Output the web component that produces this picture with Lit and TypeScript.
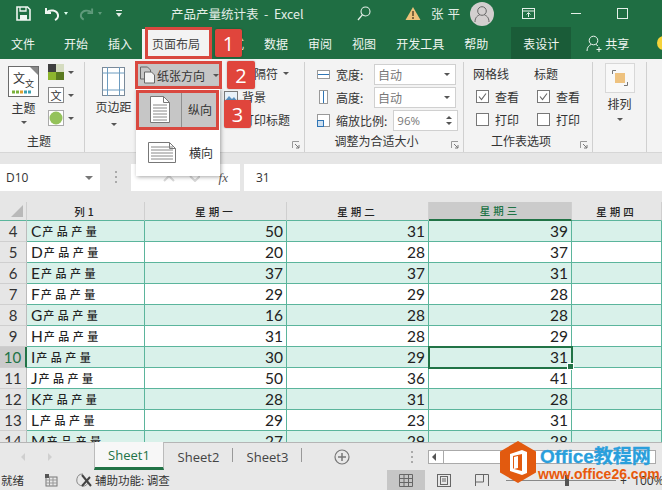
import { LitElement, html, css, svg } from "lit";
import { customElement } from "lit/decorators.js";

const rows: [number, string, number, number, number][] = [
  [4, "C", 50, 31, 39], [5, "D", 20, 28, 37], [6, "E", 37, 37, 31], [7, "F", 29, 29, 28],
  [8, "G", 16, 28, 28], [9, "H", 31, 28, 29], [10, "I", 30, 29, 31], [11, "J", 50, 36, 41],
  [12, "K", 28, 31, 28], [13, "L", 29, 23, 31], [14, "M", 27, 29, 28],
];

const arrow = html`<span class="arrow"></span>`;
const launcher = html`<svg class="launcher" width="8" height="8" viewBox="0 0 8 8"><path d="M.5 7V.5H7" fill="none" stroke="#999"/><path d="M3 3l4 4M4 7h3V4" fill="none" stroke="#777"/></svg>`;
const check = html`<svg class="cb" width="13" height="13" viewBox="0 0 13 13"><rect x=".5" y=".5" width="12" height="12" fill="#fff" stroke="#777"/><path d="M3 6.5l2.5 3L10 3.5" fill="none" stroke="#666" stroke-width="1.1"/></svg>`;
const uncheck = html`<svg class="cb" width="13" height="13" viewBox="0 0 13 13"><rect x=".5" y=".5" width="12" height="12" fill="#fff" stroke="#777"/></svg>`;
const docLines = (x1: number, x2: number, ys: number[]) => ys.map((y) => svg`<path d="M${x1} ${y}H${x2}" stroke="#888"/>`);

@customElement("app-root")
export class AppRoot extends LitElement {
  static styles = css`
    :host { display: block; width: 662px; height: 490px; overflow: hidden; position: relative; background: #e6e6e6;
      font-family: "Noto Sans CJK SC", "Liberation Sans", sans-serif; font-size: 12px; color: #333; }
    svg { display: block; flex: none; }
    .title { height: 27px; background: #1f6e43; color: #e4efe8; display: flex; align-items: center; position: relative; }
    .q { display: flex; align-items: center; padding-left: 16px; width: 171px; box-sizing: border-box; flex: none; }
    .q .tri { width: 0; height: 0; border: 2.5px solid transparent; border-top: 3px solid #dfe; border-bottom: 0; margin: 0 0 0 4px; }
    .q .tri.dim { border-top-color: #5f9a7b; }
    .docname { width: 186px; font-size: 12.5px; flex: none; white-space: pre; }
    .warn { margin-left: 34px; }
    .user { margin-left: 10px; letter-spacing: 4px; font-size: 12.5px; width: 29px; white-space: nowrap; flex: none; }
    .avatar { width: 24px; height: 24px; border-radius: 50%; background: #d3cfcf; margin-left: 10px; display: flex; align-items: center; justify-content: center; flex: none; }
    .disp { margin-left: 28px; }
    .min { margin-left: 36px; width: 10px; height: 1px; background: #e4efe8; flex: none; }
    .max { margin-left: 36px; width: 9px; height: 9px; border: 1px solid #e4efe8; flex: none; }
    .tabs { height: 32px; background: #1f6e43; color: #eef5f0; display: flex; align-items: stretch; position: relative; }
    .tab { padding: 0 10px; display: flex; align-items: center; white-space: nowrap; }
    .tab.file { padding: 0 19px 0 11px; }
    .tab.active { background: #f3f3f3; margin-top: 2px; padding-bottom: 1px; }
    .tab.active span { color: #444; }
    .tab.ctx { background: #1a5c38; margin: 0 15px 0 13px; padding: 0 12px; }
    .share { display: flex; align-items: center; gap: 2px; }
    .smile { position: absolute; right: -8px; top: 9px; width: 13px; height: 14px; background: #f5d33a; border-radius: 50%; }
    .ribbon { height: 94px; background: #f3f3f3; display: flex; border-bottom: 1px solid #d6d6d6; box-sizing: border-box; }
    .grp { position: relative; flex: none; box-sizing: border-box; border-right: 1px solid #d0d0d0; margin: 3px 0 10px; height: 90px; }
    .glabel { position: absolute; left: 0; right: 0; top: 70px; text-align: center; white-space: nowrap; }
    .launcher { position: absolute; right: 4px; top: 79px; }
    .arrow { display: inline-block; width: 0; height: 0; border: 3px solid transparent; border-top: 3px solid #555; border-bottom: 0; flex: none; }
    .g-theme { width: 85px; display: flex; padding: 0 0 0 8px; gap: 9px; }
    .g-theme .glabel { right: 6px; }
    .bigcol { display: flex; flex-direction: column; align-items: center; width: 31px; }
    .bigcol .lbl { margin-top: 3px; line-height: 16px; white-space: nowrap; }
    .bigcol .arrow { margin-top: 5px; }
    .themebig { margin-top: 4px; }
    .small3 { display: flex; flex-direction: column; gap: 7px; margin-top: 2px; }
    .small3 div { display: flex; align-items: center; gap: 4px; height: 16px; }
    .g-page { width: 220px; display: flex; }
    .margin { width: 51px; flex: none; display: flex; flex-direction: column; align-items: center; margin-left: 3px; }
    .margin svg { margin-top: 5px; }
    .margin .lbl { margin-top: 3px; line-height: 16px; white-space: nowrap; }
    .margin .arrow { margin-top: 8px; }
    .orient { width: 84px; height: 24px; flex: none; background: #c6c6c6; margin: 1px 0 0 -2px; display: flex; align-items: center; padding-left: 3px; box-sizing: border-box; gap: 2px; }
    .orient .arrow { margin-left: 6px; }
    .pright { position: relative; flex: 1; display: flex; flex-direction: column; padding-left: 3px; }
    .pright div { display: flex; align-items: center; height: 23px; white-space: nowrap; }
    .pright .p1 { padding-left: 30px; gap: 5px; }
    .pright .p2 { gap: 4px; }
    .pright .p3 { padding-left: 18px; }
    .g-scale { width: 159px; padding: 1px 7px 0 12px; display: flex; flex-direction: column; gap: 1px; }
    .g-scale .glabel { right: 15px; }
    .srow { display: flex; align-items: center; height: 22px; gap: 6px; }
    .fld { background: #fff; border: 1px solid #d0d0d0; height: 21px; margin-left: auto; box-sizing: border-box; display: flex; align-items: center; justify-content: space-between; padding: 0 5px 0 3px; color: #777; font-size: 12px; flex: none; }
    .f-auto { width: 82px; }
    .f-pct { width: 65px; font-family: "Open Sans", sans-serif; font-size: 11.5px; }
    .lab { white-space: nowrap; }
    .spin { display: flex; flex-direction: column; gap: 3px; }
    .spin i { width: 0; height: 0; border: 3px solid transparent; border-bottom: 3px solid #555; border-top: 0; display: block; }
    .spin i + i { border-top: 3px solid #555; border-bottom: 0; }
    .g-opts { width: 129px; display: flex; padding: 1px 0 0 9px; gap: 15px; }
    .g-opts .glabel { right: 14px; }
    .optcol { display: flex; flex-direction: column; }
    .optcol .hd { height: 22px; line-height: 22px; white-space: nowrap; }
    .optrow { display: flex; align-items: center; gap: 6px; height: 23px; padding-left: 3px; white-space: nowrap; }
    .g-arr { width: 54px; display: flex; flex-direction: column; align-items: center; }
    .arrbox { width: 30px; height: 30px; box-sizing: border-box; border: 1px solid #d8d8d8; background: #f8f8f8; display: flex; align-items: center; justify-content: center; margin-top: 1px; }
    .g-arr .lbl { margin-top: 3px; line-height: 16px; }
    .g-arr .arrow { margin-top: 6px; }
    .fbar { height: 49px; background: #e6e6e6; display: flex; align-items: flex-start; padding-top: 11px; box-sizing: border-box; gap: 4px; }
    .namebox { width: 100px; height: 27px; background: #fff; display: flex; align-items: center; justify-content: space-between; padding: 0 7px 0 6px; box-sizing: border-box; font-family: "Open Sans", sans-serif; font-size: 12px; flex: none; margin-right: 27px; position: relative; }
    .namebox .arrow { border-width: 4px; border-top-color: #777; border-bottom: 0; }
    .dots { position: absolute; right: -17px; top: 7px; width: 2px; height: 12px; background: repeating-linear-gradient(#aaa 0 2px, transparent 2px 5px); }
    .fxbox { width: 109px; height: 27px; background: #fff; flex: none; display: flex; align-items: center; justify-content: flex-end; padding-right: 12px; box-sizing: border-box; color: #555; font: italic 13px "Liberation Serif", serif; }
    .valbox { flex: 1; height: 27px; background: #fff; display: flex; align-items: center; padding-left: 12px; font-family: "Open Sans", sans-serif; font-size: 12px; }
    .fxmarks { margin-right: 19px; }
    .sheet { height: 240px; overflow: hidden; background: #fff; }
    .r { display: grid; grid-template-columns: 27px 118px 142px 142px 143px 1fr; height: 21px; }
    .h { height: 19px; background: #e6e6e6; }
    .h > div { border-right: 1px solid #cfcfcf; border-bottom: 1px solid #5bb59c; display: flex; align-items: center; justify-content: center; font-size: 10.5px; letter-spacing: 3px; color: #222; white-space: nowrap; box-sizing: border-box; font-family: "Noto Sans CJK SC", sans-serif; font-weight: 500; }
    .h > .corner { position: relative; }
    .corner::after { content: ""; position: absolute; right: 3px; bottom: 3px; border: 6px solid #b9b9b9; border-top-color: transparent; border-left-color: transparent; }
    .h > .colsel { background: #cbcbcb; color: #217346; border-bottom: 2px solid #217346; }
    .r > .rh { background: #e6e6e6; border-right: 1px solid #bcbcbc; border-bottom: 1px solid #cfcfcf; font: 15px Lato, sans-serif; display: flex; align-items: center; justify-content: center; box-sizing: border-box; }
    .r > .rh.sel { background: #cbcbcb; color: #217346; border-right: 2px solid #217346; }
    .c { border-right: 1px solid #5bb59c; border-bottom: 1px solid #5bb59c; box-sizing: border-box; font: 15.5px Lato, sans-serif; color: #222; display: flex; align-items: center; justify-content: flex-end; padding-right: 3px; position: relative; }
    .c.txt { justify-content: flex-start; padding: 0 0 0 4px; }
    .c.txt b { font: 500 11px "Noto Sans CJK SC", sans-serif; letter-spacing: 3.5px; margin-left: 1px; }
    .odd .c { background: #d9f1ea; }
    .c.active { outline: 2px solid #217346; outline-offset: -1px; z-index: 1; }
    .c.active::after { content: ""; position: absolute; right: -3px; bottom: -3px; width: 5px; height: 5px; background: #217346; border: 1px solid #fff; }
    .tabbar { height: 28px; background: #e8e8e8; border-top: 1px solid #b5b5b5; box-sizing: border-box; display: flex; align-items: stretch; font: 13px "Open Sans", sans-serif; color: #444; position: relative; }
    .nav { width: 94px; flex: none; display: flex; align-items: center; padding-left: 21px; gap: 23px; box-sizing: border-box; }
    .nav i { width: 0; height: 0; border: 4px solid transparent; }
    .nav i.l { border-right: 4px solid #cfcfcf; border-left: 0; }
    .nav i.rr { border-left: 4px solid #cfcfcf; border-right: 0; }
    .stab { width: 69px; flex: none; display: flex; align-items: center; justify-content: center; position: relative; }
    .stab.on { background: #f7f7f7; color: #217346; border-bottom: 3px solid #217346; height: 25px; margin-top: -1px; border-left: 1px solid #bbb; border-right: 1px solid #bbb; box-sizing: content-box; width: 68px; }
    .stab.s3::after, .stab.s2::after { content: ""; position: absolute; right: 0; top: 5px; height: 14px; border-right: 1px solid #999; }
    .addsheet { margin: 6px 0 0 32px; flex: none; }
    .hdots { width: 2px; height: 12px; margin: 8px 0 0 61px; background: repeating-linear-gradient(#aaa 0 2px, transparent 2px 5px); flex: none; }
    .hscroll { flex: 1; margin: 7px 6px 0 15px; height: 14px; border: 1px solid #aaa; background: #fff; position: relative; box-sizing: border-box; }
    .hscroll::before { content: ""; position: absolute; left: 3px; top: 2px; border: 4px solid transparent; border-right: 4px solid #555; border-left: 0; }
    .hscroll::after { content: ""; position: absolute; left: 14px; top: 0; bottom: 0; border-left: 1px solid #aaa; }
    .status { height: 20px; background: #e8e8e8; display: flex; align-items: center; position: relative; font-size: 11.5px; color: #333; }
    .st-ready { width: 45px; padding-left: 1px; box-sizing: border-box; flex: none; }
    .st-a { margin-left: 18px; display: flex; align-items: center; gap: 2px; white-space: nowrap; }
    .views { margin-left: auto; display: flex; align-items: stretch; height: 20px; }
    .vw { width: 38px; display: flex; align-items: center; justify-content: center; flex: none; }
    .vw.on { background: #c6c6c6; }
    .zoom { width: 161px; display: flex; align-items: center; flex: none; box-sizing: border-box; padding-left: 5px; font: 12px "Open Sans", sans-serif; white-space: nowrap; }
    .track { width: 110px; height: 1px; background: #888; position: relative; margin: 0 4px 0 0; flex: none; }
    .track::after { content: ""; position: absolute; left: 59px; top: -5px; width: 4px; height: 11px; background: #555; }
    .menu { position: absolute; left: 136px; top: 88px; width: 84px; height: 88px; background: #fff; box-shadow: 1px 1px 4px rgba(0,0,0,.35); box-sizing: border-box; padding-top: 4px; }
    .mi { display: grid; grid-template-columns: 42px 1fr; height: 35px; margin: 0 2px 0 3px; background: #c6c6c6; }
    .mi > div { display: flex; align-items: center; justify-content: center; }
    .mi > div + div { border-left: 1px solid #8f8f8f; }
    .mi2 { display: grid; grid-template-columns: 45px 1fr; height: 50px; align-items: center; margin: 0 2px 0 3px; }
    .mi2 > div:first-child { display: flex; justify-content: center; padding-left: 1px; }
    .mi2 > div:last-child { padding-left: 5px; }
    .rbox { position: absolute; border: 3px solid #d9483f; box-sizing: border-box; pointer-events: none; }
    .rb1 { left: 145px; top: 27px; width: 67px; height: 32px; }
    .rb2 { left: 135px; top: 61px; width: 87px; height: 28px; }
    .rb3 { left: 136px; top: 90px; width: 83px; height: 40px; }
    .badge { position: absolute; width: 27px; height: 28px; background: #e0453c; color: #fff; border-radius: 2px; font: 20px "Open Sans", sans-serif; display: flex; align-items: center; justify-content: center; box-shadow: 0 0 2px rgba(0,0,0,.3); }
    .b1 { left: 215px; top: 29px; }
    .b2 { left: 227px; top: 61px; width: 28px; }
    .b3 { left: 224px; top: 100px; }
    .wm { position: absolute; left: 499px; top: 441px; display: flex; }
    .wmtext { margin-left: 3px; display: flex; flex-direction: column; font-family: "Liberation Sans", "Noto Sans CJK SC", sans-serif; font-weight: bold; white-space: nowrap; }
    .wm1 { color: #2a9fdc; font-size: 19px; line-height: 22px; margin-top: 5px; -webkit-text-stroke: .3px #2a9fdc; }
    .wm2 { color: #e8590c; font-size: 14px; line-height: 16px; margin-left: -2px; margin-top: -2px; }
  `;

  render() {
    return html`
      <div class="title">
        <div class="q">
          <svg width="15" height="15" viewBox="0 0 15 15"><path d="M1 1h10.5L14 3.5V14H1z" fill="none" stroke="#f0f6f2" stroke-width="1.6"/><path d="M4 1v4h6V1" fill="none" stroke="#f0f6f2" stroke-width="1.3"/><rect x="4" y="9" width="7" height="5" fill="#f0f6f2"/></svg>
          <svg style="margin-left:13px" width="16" height="14" viewBox="0 0 16 14"><path d="M2 1v5h5" fill="none" stroke="#f0f6f2" stroke-width="2"/><path d="M2.5 5.5C6 2 13 3 14 8c.3 2-1 4-3 5" fill="none" stroke="#f0f6f2" stroke-width="2"/></svg>
          <span class="tri"></span>
          <svg style="margin-left:11px" width="15" height="14" viewBox="0 0 16 14"><path d="M14 1v5H9" fill="none" stroke="#5f9a7b" stroke-width="2"/><path d="M13.5 5.5C10 2 3 3 2 8c-.3 2 1 4 3 5" fill="none" stroke="#5f9a7b" stroke-width="2"/></svg>
          <span class="tri dim"></span>
          <svg style="margin-left:13px" width="8" height="9" viewBox="0 0 8 9"><path d="M1 1.5h6" stroke="#e4efe8"/><path d="M1 4l3 4 3-4z" fill="#e4efe8"/></svg>
        </div>
        <div class="docname">产品产量统计表  -  Excel</div>
        <svg width="14" height="15" viewBox="0 0 14 15"><circle cx="8.5" cy="5.5" r="4.5" fill="none" stroke="#e4efe8" stroke-width="1.1"/><path d="M5.3 8.8L1 14" stroke="#e4efe8" stroke-width="1.3"/></svg>
        <svg class="warn" width="16" height="15" viewBox="0 0 16 15"><path d="M8 1l7.5 13H.5z" fill="#edc27a"/><path d="M8 5v5M8 11v2" stroke="#5a4a2a" stroke-width="1.5"/></svg>
        <div class="user">张平</div>
        <div class="avatar"><svg width="16" height="18" viewBox="0 0 16 18"><circle cx="8" cy="6" r="4.3" fill="none" stroke="#666"/><path d="M1 17c0-5 3-6.5 4.5-7M15 17c0-5-3-6.5-4.5-7" fill="none" stroke="#666"/></svg></div>
        <svg class="disp" width="13" height="11" viewBox="0 0 13 11"><rect x=".5" y=".5" width="12" height="10" fill="none" stroke="#e4efe8"/><path d="M.5 3h12M6.5 9V5M4.5 6.5l2-2 2 2" fill="none" stroke="#e4efe8"/></svg>
        <div class="min"></div>
        <div class="max"></div>
      </div>
      <div class="tabs">
        <div class="tab file">文件</div>
        <div class="tab">开始</div>
        <div class="tab">插入</div>
        <div class="tab active"><span>页面布局</span></div>
        <div class="tab">公式</div>
        <div class="tab">数据</div>
        <div class="tab">审阅</div>
        <div class="tab">视图</div>
        <div class="tab">开发工具</div>
        <div class="tab">帮助</div>
        <div class="tab ctx">表设计</div>
        <div class="share">
          <svg width="17" height="17" viewBox="0 0 17 17"><circle cx="7.5" cy="5.5" r="4.3" fill="none" stroke="#eef5f0"/><path d="M1 16c0-4 2-5.5 4-6.5M10 9.500c.8.4 1.500.9 2 1.500M13 12v5M10.500 14.500h5" fill="none" stroke="#eef5f0"/></svg>
          <span>共享</span>
        </div>
        <div class="smile"></div>
      </div>
      <div class="ribbon">
        <div class="grp g-theme">
          <div class="bigcol">
            <svg class="themebig" width="31" height="31" viewBox="0 0 31 31"><rect x=".5" y=".5" width="30" height="30" fill="#fff" stroke="#6b6b6b"/><path d="M22 1h8v8z" fill="#888"/><text x="5" y="17" font-size="12" fill="#333" font-family="Noto Sans CJK SC">文</text><text x="17" y="21" font-size="9" fill="#333" font-family="Noto Sans CJK SC">文</text><path d="M4 26h3M8 26h3" stroke="#7bb13c" stroke-width="3"/><path d="M12 26h3" stroke="#e0a030" stroke-width="3"/><path d="M16 26h3M20 26h3" stroke="#3aa0b0" stroke-width="3"/></svg>
            <div class="lbl">主题</div>
            ${arrow}
          </div>
          <div class="small3">
            <div><svg width="16" height="16" viewBox="0 0 16 16"><rect width="8" height="8" fill="#3f3f3f"/><rect x="8" width="8" height="8" fill="#d5dcc0"/><rect y="8" width="8" height="8" fill="#8db52e"/><rect x="8" y="8" width="8" height="8" fill="#5a7a20"/></svg>${arrow}</div>
            <div><svg width="16" height="16" viewBox="0 0 16 16"><rect x=".5" y=".5" width="15" height="15" fill="#fff" stroke="#888"/><text x="2.500" y="12.500" font-size="11" fill="#333" font-family="Noto Sans CJK SC">文</text></svg>${arrow}</div>
            <div><svg width="16" height="16" viewBox="0 0 16 16"><rect x=".5" y=".5" width="15" height="15" fill="#fff" stroke="#aaa"/><circle cx="8" cy="8" r="6.500" fill="#94c25a"/></svg>${arrow}</div>
          </div>
          <div class="glabel">主题</div>
        </div>
        <div class="grp g-page">
          <div class="margin">
            <svg width="23" height="29" viewBox="0 0 23 29"><rect x=".5" y=".5" width="22" height="28" fill="#fff" stroke="#7a8a9a"/><path d="M.5 6h22M.5 23h22M5.500 0v29M17.500 0v29" stroke="#6d9cc0"/></svg>
            <div class="lbl">页边距</div>
            ${arrow}
          </div>
          <div class="orient">
            <svg width="15" height="18" viewBox="0 0 15 18"><path d="M.5 1h7l3 3v9h-10z" fill="none" stroke="#666"/><path d="M4.500 6h7l3 3v8h-10z" fill="#f5f5f5" stroke="#666"/></svg>
            <span>纸张方向</span>${arrow}
          </div>
          <div class="pright">
            <div class="p1"><span>隔符</span>${arrow}</div>
            <div class="p2"><svg width="14" height="11" viewBox="0 0 14 11"><rect x=".5" y=".5" width="13" height="10" fill="#e8f1f8" stroke="#7a7a7a"/><path d="M1 10l4-5 3 3 2-2 3 4z" fill="#5b93c4"/></svg><span>背景</span></div>
            <div class="p3"><span>打印标题</span></div>
            ${launcher}
          </div>
        </div>
        <div class="grp g-scale">
          <div class="srow"><svg width="13" height="14" viewBox="0 0 13 14"><rect x=".5" y="3.500" width="12" height="8" fill="#fff" stroke="#999"/><path d="M1 7.500h11" stroke="#2f75b5"/></svg><span class="lab">宽度:</span><div class="fld f-auto"><span>自动</span>${arrow}</div></div>
          <div class="srow"><svg width="13" height="14" viewBox="0 0 13 14"><rect x="2.500" y=".5" width="8" height="13" fill="#fff" stroke="#999"/><path d="M6.500 1v12" stroke="#2f75b5"/></svg><span class="lab">高度:</span><div class="fld f-auto"><span>自动</span>${arrow}</div></div>
          <div class="srow"><svg width="13" height="13" viewBox="0 0 13 13"><rect x=".5" y=".5" width="12" height="12" fill="#fff" stroke="#999"/><rect x=".5" y="6.500" width="6" height="6" fill="#cfe0f0" stroke="#2f75b5"/></svg><span class="lab">缩放比例:</span><div class="fld f-pct"><span>96%</span><div class="spin"><i></i><i></i></div></div></div>
          <div class="glabel">调整为合适大小</div>${launcher}
        </div>
        <div class="grp g-opts">
          <div class="optcol"><div class="hd">网格线</div><div class="optrow">${check}查看</div><div class="optrow">${uncheck}打印</div></div>
          <div class="optcol"><div class="hd">标题</div><div class="optrow">${check}查看</div><div class="optrow">${uncheck}打印</div></div>
          <div class="glabel">工作表选项</div>${launcher}
        </div>
        <div class="grp g-arr">
          <div class="arrbox"><svg width="16" height="16" viewBox="0 0 16 16"><path d="M.5 4V.5H4M15.500 12v3.500H12" fill="none" stroke="#777"/><rect x="3" y="3" width="10" height="10" fill="#eec27f"/></svg></div>
          <div class="lbl">排列</div>
          ${arrow}
        </div>
      </div>
      <div class="fbar">
        <div class="namebox">D10<span class="arrow"></span><span class="dots"></span></div>
        <div class="fxbox">
          <svg class="fxmarks" width="50" height="8" viewBox="0 0 50 8"><path d="M14 7l5-5 5 5M40 2l5 5 5-5" fill="none" stroke="#d8d8d8" stroke-width="2"/></svg>
          fx
        </div>
        <div class="valbox">31</div>
      </div>
      <div class="sheet">
        <div class="r h">
          <div class="corner"></div><div>列1</div><div>星期一</div><div>星期二</div><div class="colsel">星期三</div><div>星期四</div>
        </div>
        ${rows.map((r) => html`
          <div class="r ${r[0] % 2 === 0 ? "odd" : ""}">
            <div class="rh ${r[0] === 10 ? "sel" : ""}">${r[0]}</div>
            <div class="c txt">${r[1]}<b>产品产量</b></div>
            <div class="c">${r[2]}</div>
            <div class="c">${r[3]}</div>
            <div class="c ${r[0] === 10 ? "active" : ""}">${r[4]}</div>
            <div class="c"></div>
          </div>`)}
      </div>
      <div class="tabbar">
        <div class="nav"><i class="l"></i><i class="rr"></i></div>
        <div class="stab on">Sheet1</div>
        <div class="stab s2">Sheet2</div>
        <div class="stab s3">Sheet3</div>
        <svg class="addsheet" width="16" height="16" viewBox="0 0 16 16"><circle cx="8" cy="8" r="7" fill="none" stroke="#777" stroke-width="1.200"/><path d="M4 8h8M8 4v8" stroke="#777" stroke-width="1.500"/></svg>
        <div class="hdots"></div>
        <div class="hscroll"></div>
      </div>
      <div class="status">
        <div class="st-ready">就绪</div>
        <svg width="13" height="13" viewBox="0 0 13 13"><rect x="1" y="3" width="11" height="9" fill="none" stroke="#777"/><path d="M1 6h11M1 9h11M4.500 3v9M8 3v9" stroke="#999"/><rect width="4" height="4" fill="#555"/></svg>
        <div class="st-a">
          <svg width="17" height="16" viewBox="0 0 17 16"><path d="M7 2a6 6 0 1 0 5 9" fill="none" stroke="#888"/><path d="M6 3l9 11M14 5L6 14" stroke="#444" stroke-width="2"/></svg>
          <span>辅助功能: 调查</span>
        </div>
        <div class="views">
          <div class="vw on"><svg width="14" height="13" viewBox="0 0 14 13"><path d="M.5.5h13v12H.5zM.5 4.500h13M.5 8.500h13M5 .5v12M9.500.5v12" fill="none" stroke="#666"/></svg></div>
          <div class="vw"><svg width="14" height="13" viewBox="0 0 14 13"><rect x=".5" y=".5" width="13" height="12" fill="none" stroke="#666"/><rect x="3.500" y="2.500" width="7" height="8" fill="none" stroke="#666"/><path d="M5 5h4M5 7h4" stroke="#666"/></svg></div>
          <div class="vw"><svg width="14" height="12" viewBox="0 0 14 12"><path d="M.5 12V.5h13V12M.5 8h8V.5" fill="none" stroke="#666"/></svg></div>
        </div>
        <div class="zoom"><span class="track"></span><span>+&nbsp;&nbsp;100%</span></div>
      </div>

      <div class="menu">
        <div class="mi">
          <div><svg width="20" height="27" viewBox="0 0 20 27">
            <path d="M.5.5h13l6 6v20H.5z" fill="#fff" stroke="#777"/><path d="M13.500.5v6h6" fill="none" stroke="#777"/>${docLines(3, 17, [9, 12, 15, 18, 21, 24])}</svg></div>
          <div>纵向</div>
        </div>
        <div class="mi2">
          <div><svg width="28" height="21" viewBox="0 0 28 21"><path d="M.5.5h21l6 6v14H.5z" fill="#fff" stroke="#777"/><path d="M21.500.5v6h6" fill="none" stroke="#777"/>${docLines(3, 25, [5, 8, 11, 14, 17])}</svg></div>
          <div>横向</div>
        </div>
      </div>
      <div class="rbox rb1"></div>
      <div class="rbox rb2"></div>
      <div class="rbox rb3"></div>
      <div class="badge b1">1</div>
      <div class="badge b2">2</div>
      <div class="badge b3">3</div>
      <div class="wm">
        <svg width="38" height="43" viewBox="0 0 38 43"><path d="M19 0l18 10.500v21L19 42 1 31.500v-21z" fill="#e25a0f"/><path d="M23 9l-12 4v17l12 4 5-2V11zM23 13v17l-8-2 4-1V15l-4 1v11l-1 1V15z" fill="#fff" fill-rule="evenodd"/></svg>
        <div class="wmtext"><span class="wm1">Office教程网</span><span class="wm2">www.office26.com</span></div>
      </div>
    `;
  }
}
